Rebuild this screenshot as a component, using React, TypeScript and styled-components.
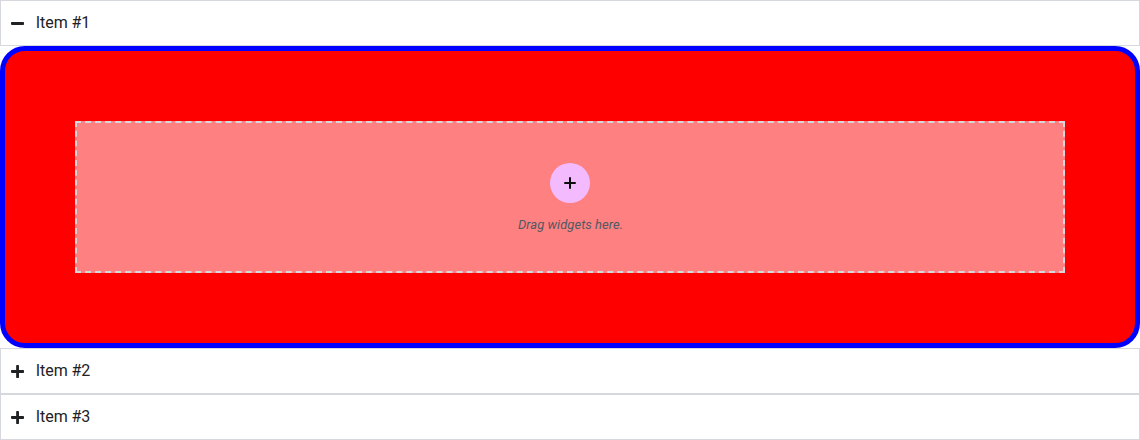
import React from "react";
import styled, { createGlobalStyle } from "styled-components";

const Global = createGlobalStyle`
  *, *::before, *::after { box-sizing: border-box; }
  body { margin: 0; background: #fff; font-family: Roboto, sans-serif; color: #1f2124; }
`;

const Header = styled.div`
  display: flex;
  align-items: center;
  gap: 11.6px;
  height: 46px;
  padding: 0 10px;
  border: 1px solid #d5d8dc;
  font-size: 16px;
  line-height: 24px;
  letter-spacing: -0.05px;
`;

const ToggleIcon = styled.svg`
  display: block;
  width: 13.125px;
  height: 15px;
  fill: currentColor;
`;

const Content = styled.div`
  height: 302px;
  padding: 70px;
  border: 5px solid #00f;
  border-radius: 25px;
  background: #f00;
`;

const DropZone = styled.div`
  display: flex;
  flex-direction: column;
  align-items: center;
  height: 152px;
  padding-top: 40px;
  border: 2px dashed #d5d8dc;
  background: rgba(255, 255, 255, 0.5);
`;

const AddButton = styled.div`
  display: flex;
  align-items: center;
  justify-content: center;
  width: 40px;
  height: 40px;
  border-radius: 50%;
  background: #f3bafd;
  color: #0c0d0e;
`;

const Hint = styled.div`
  margin-top: 14px;
  padding-left: 1px;
  font-size: 13px;
  line-height: 15px;
  font-style: italic;
  letter-spacing: 0.04px;
  color: #515962;
`;

const PLUS =
  "M416 208H272V64c0-17.67-14.33-32-32-32h-32c-17.67 0-32 14.33-32 32v144H32c-17.67 0-32 14.33-32 32v32c0 17.67 14.33 32 32 32h144v144c0 17.67 14.33 32 32 32h32c17.67 0 32-14.33 32-32V304h144c17.67 0 32-14.33 32-32v-32c0-17.67-14.33-32-32-32z";
const MINUS =
  "M416 208H32c-17.67 0-32 14.33-32 32v32c0 17.67 14.33 32 32 32h384c17.67 0 32-14.33 32-32v-32c0-17.67-14.33-32-32-32z";

function Item({ title, open, children }: { title: string; open?: boolean; children?: React.ReactNode }) {
  return (
    <>
      <Header>
        <ToggleIcon viewBox="0 0 448 512">
          <path d={open ? MINUS : PLUS} />
        </ToggleIcon>
        {title}
      </Header>
      {open && <Content>{children}</Content>}
    </>
  );
}

export default function App() {
  return (
    <>
      <Global />
      <Item title="Item #1" open>
        <DropZone>
          <AddButton>
            <svg width="12" height="12" viewBox="0 0 12 12" stroke="currentColor" strokeWidth="2" strokeLinecap="round">
              <path d="M6 1v10M1 6h10" />
            </svg>
          </AddButton>
          <Hint>Drag widgets here.</Hint>
        </DropZone>
      </Item>
      <Item title="Item #2" />
      <Item title="Item #3" />
    </>
  );
}
